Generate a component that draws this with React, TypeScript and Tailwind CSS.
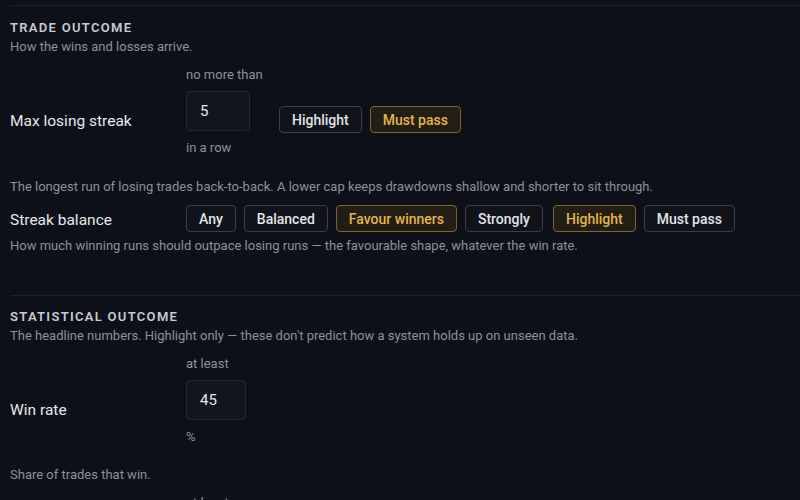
import { useState } from 'react'

const font = { fontFamily: 'Roboto, "Noto Sans", sans-serif' }

type Opt = { id: string; label: string }

function Chip({ label, active, onClick }: { label: string; active: boolean; onClick: () => void }) {
  return (
    <button
      type="button"
      onClick={onClick}
      className={
        active
          ? 'h-[27px] rounded-[4px] border border-[#7d6530] bg-[#221e15] px-[12px] text-[14px] font-medium leading-none text-[#e3b54b]'
          : 'h-[27px] rounded-[4px] border border-[#3a3f4a] bg-[#10131a] px-[12px] text-[14px] font-medium leading-none text-[#e2e4e8]'
      }
    >
      {label}
    </button>
  )
}

function NumberRow({
  label,
  prefix,
  suffix,
  value,
  width,
  children,
}: {
  label: string
  prefix: string
  suffix: string
  value: string
  width: string
  children?: React.ReactNode
}) {
  return (
    <div className="flex items-start">
      <div className="mt-[44px] w-[176px] shrink-0 text-[15.5px] leading-[22px] text-[#e6e8ec]">{label}</div>
      <div className="flex w-[93px] shrink-0 flex-col items-start">
        <span className="text-[13px] leading-[18px] text-[#8b909b]">{prefix}</span>
        <input
          defaultValue={value}
          className={`mt-[7px] h-[40px] ${width} rounded-[4px] border border-[#23272f] bg-[#12151c] px-[13px] text-[15px] text-[#e6e8ec] outline-none`}
        />
        <span className="mt-[8px] text-[13px] leading-[18px] text-[#8b909b]">{suffix}</span>
      </div>
      {children}
    </div>
  )
}

export default function App() {
  const [streakMode, setStreakMode] = useState('must')
  const [balance, setBalance] = useState('favour')
  const [balanceMode, setBalanceMode] = useState('highlight')

  const balanceOpts: Opt[] = [
    { id: 'any', label: 'Any' },
    { id: 'balanced', label: 'Balanced' },
    { id: 'favour', label: 'Favour winners' },
    { id: 'strongly', label: 'Strongly' },
  ]

  return (
    <div style={font} className="h-[500px] overflow-hidden bg-[#0d1018] pl-[10px] pt-[5px]">
      <section className="border-t border-[#1e222b] pb-[40px] pt-[13px]">
        <h2 className="text-[13px] font-semibold uppercase leading-[18px] tracking-[0.1em] text-[#c8cbd2]">
          Trade outcome
        </h2>
        <p className="mt-px text-[13px] leading-[18px] text-[#8b909b]">How the wins and losses arrive.</p>

        <div className="mt-[10px]">
          <NumberRow label="Max losing streak" prefix="no more than" suffix="in a row" value="5" width="w-[64px]">
            <div className="mt-[40px] flex gap-[8px]">
              <Chip label="Highlight" active={streakMode === 'highlight'} onClick={() => setStreakMode('highlight')} />
              <Chip label="Must pass" active={streakMode === 'must'} onClick={() => setStreakMode('must')} />
            </div>
          </NumberRow>
        </div>
        <p className="mt-[21px] text-[13px] leading-[18px] text-[#8b909b]">
          The longest run of losing trades back-to-back. A lower cap keeps drawdowns shallow and shorter to sit through.
        </p>

        <div className="mt-[9px] flex items-center">
          <div className="mt-[3px] w-[176px] shrink-0 text-[15.5px] leading-[22px] text-[#e6e8ec]">Streak balance</div>
          <div className="flex gap-[8px]">
            {balanceOpts.map((o) => (
              <Chip key={o.id} label={o.label} active={balance === o.id} onClick={() => setBalance(o.id)} />
            ))}
          </div>
          <div className="ml-[10px] flex gap-[8px]">
            <Chip label="Highlight" active={balanceMode === 'highlight'} onClick={() => setBalanceMode('highlight')} />
            <Chip label="Must pass" active={balanceMode === 'must'} onClick={() => setBalanceMode('must')} />
          </div>
        </div>
        <p className="mt-[5px] text-[13px] leading-[18px] text-[#8b909b]">
          How much winning runs should outpace losing runs — the favourable shape, whatever the win rate.
        </p>
      </section>

      <section className="border-t border-[#1e222b] pt-[12px]">
        <h2 className="text-[13px] font-semibold uppercase leading-[18px] tracking-[0.1em] text-[#c8cbd2]">
          Statistical outcome
        </h2>
        <p className="mt-px text-[13px] leading-[18px] text-[#8b909b]">
          The headline numbers. Highlight only — these don't predict how a system holds up on unseen data.
        </p>

        <div className="mt-[10px]">
          <NumberRow label="Win rate" prefix="at least" suffix="%" value="45" width="w-[60px]" />
        </div>
        <p className="mt-[20px] text-[13px] leading-[18px] text-[#8b909b]">Share of trades that win.</p>

        <div className="mt-[10px]">
          <NumberRow label="Profit factor" prefix="at least" suffix="" value="1.3" width="w-[60px]" />
        </div>
      </section>
    </div>
  )
}
